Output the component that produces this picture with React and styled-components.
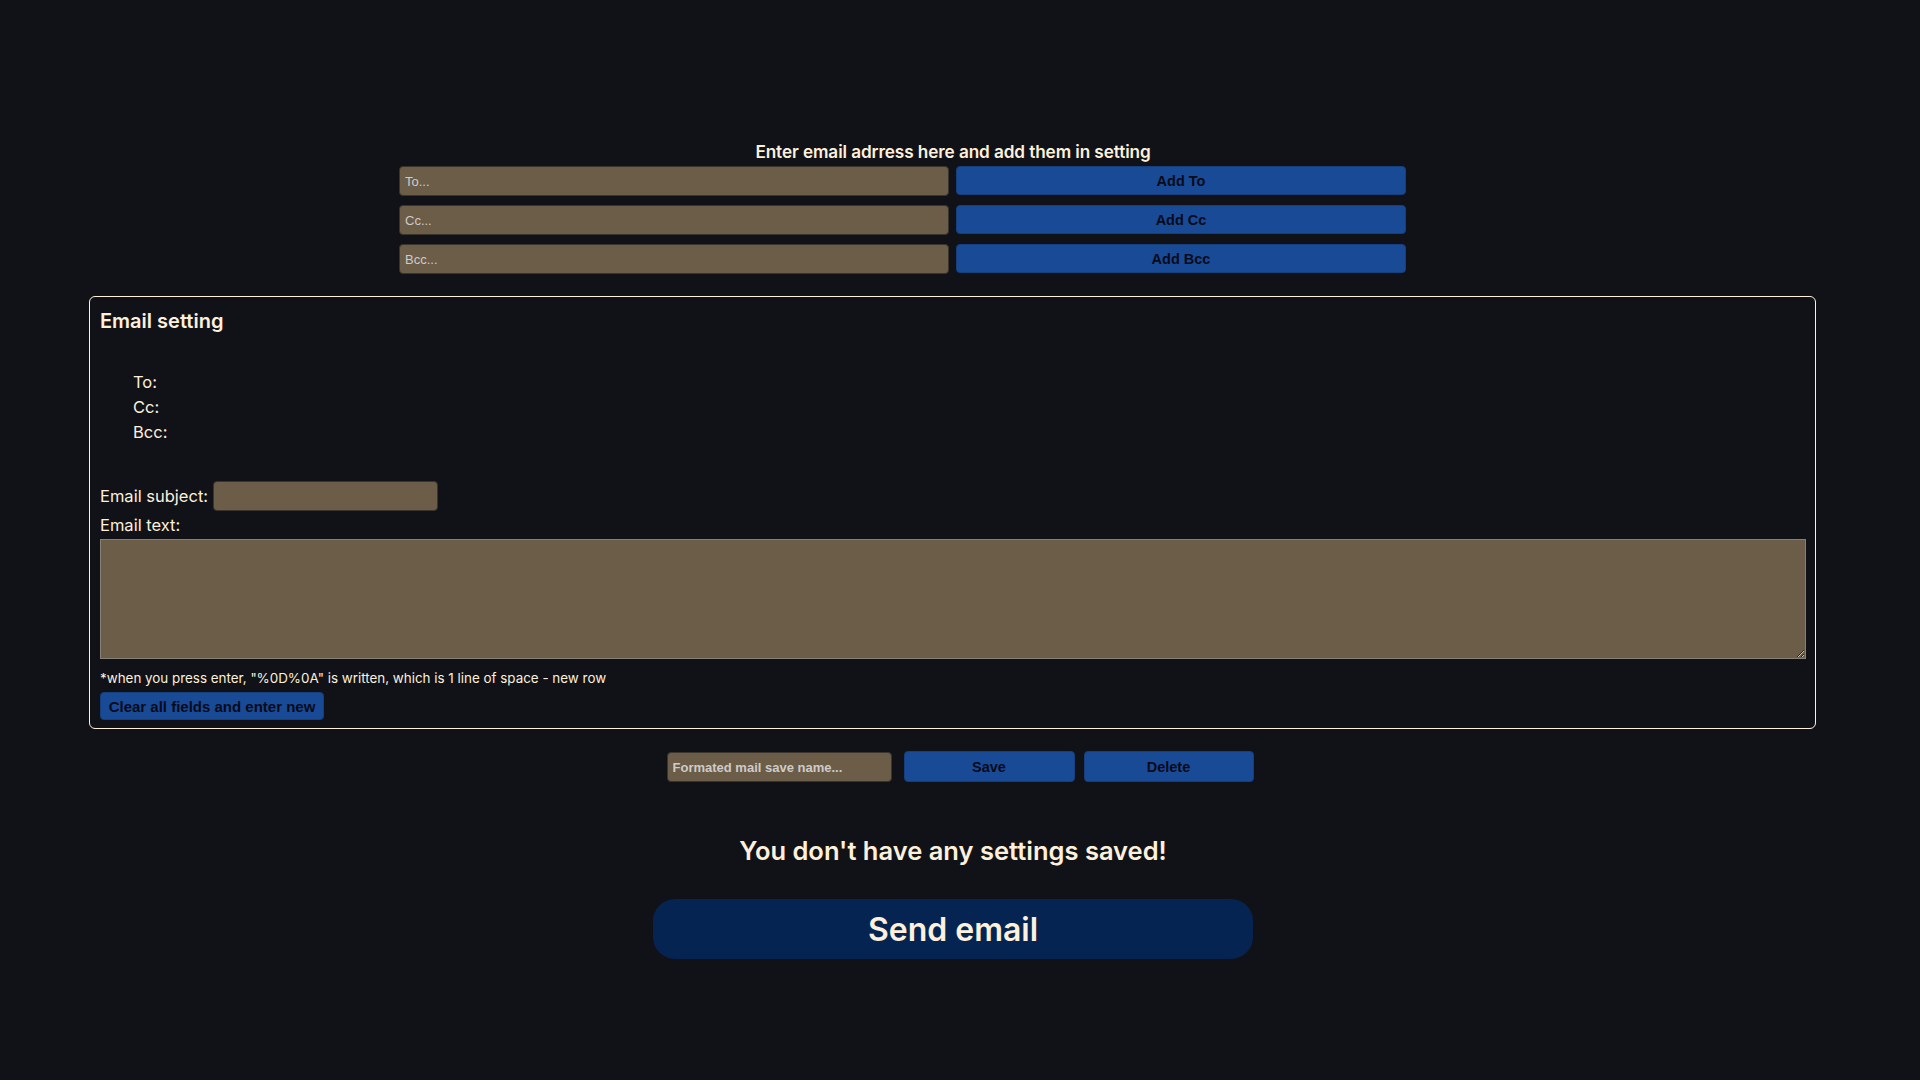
import React from "react";
import styled, { createGlobalStyle } from "styled-components";

const cream = "#fdf0dc";
const brown = "#6b5d48";
const blue = "#194a96";

const GlobalStyle = createGlobalStyle`
  body {
    margin: 0;
    background: #111217;
    color: ${cream};
    font-family: "Inter", "Open Sans", sans-serif;
  }
`;

const Page = styled.div`
  min-height: 1080px;
  padding-top: 139px;
  box-sizing: border-box;
`;

const Title = styled.h3`
  margin: 0;
  padding-right: 14px;
  text-align: center;
  font-size: 17.2px;
  font-weight: 600;
  line-height: 26px;
  letter-spacing: -0.1px;
`;

const AddressGrid = styled.div`
  display: grid;
  grid-template-columns: 550px 450px;
  column-gap: 7px;
  row-gap: 9px;
  margin: 1px 0 0 399px;
`;

const Field = styled.input`
  box-sizing: border-box;
  width: ${p => p.$width || "100%"};
  height: 30px;
  padding: 0 5px;
  background: ${brown};
  border: 1px solid #3a342c;
  border-radius: 4px;
  color: ${cream};
  font-family: "Liberation Sans", Arial, sans-serif;
  font-size: 13px;
  font-weight: ${p => (p.$bold ? 700 : 400)};
  outline: none;

  &::placeholder {
    color: #cfcbc8;
  }
`;

const Button = styled.button`
  box-sizing: border-box;
  width: ${p => p.$width || "100%"};
  height: ${p => p.$height || "29px"};
  padding: 0 4px;
  background: ${blue};
  border: 1px solid #163f80;
  border-radius: 4px;
  color: #080a1a;
  font-family: "Liberation Sans", Arial, sans-serif;
  font-size: ${p => p.$size || "14.5px"};
  font-weight: 700;
  white-space: nowrap;
  cursor: pointer;
`;

const Settings = styled.section`
  box-sizing: border-box;
  width: 1727px;
  margin: 22px 0 0 89px;
  padding: 9px 10px 8px 10px;
  border: 1px solid ${cream};
  border-radius: 6px;
`;

const SettingsHeading = styled.h2`
  margin: 0;
  font-size: 20px;
  font-weight: 600;
  line-height: 30px;
`;

const RecipientList = styled.ul`
  list-style: none;
  margin: 34px 0 0;
  padding-left: 33px;
  font-size: 16.5px;
  line-height: 25px;
`;

const SubjectRow = styled.label`
  display: flex;
  align-items: center;
  gap: 5px;
  margin-top: 36px;
  font-size: 16.5px;
`;

const Label = styled.div`
  font-size: 16.5px;
  line-height: 24px;
  margin-top: 2px;
`;

const TextArea = styled.textarea`
  display: block;
  box-sizing: border-box;
  width: 1706px;
  height: 120px;
  margin-top: 2px;
  background: ${brown};
  border: 1px solid #85807a;
  color: ${cream};
  outline: none;
`;

const Note = styled.p`
  margin: 9px 0 0;
  font-size: 13.4px;
  line-height: 20px;
`;

const ClearWrap = styled.div`
  margin-top: 4px;
`;

const SaveRow = styled.div`
  display: flex;
  justify-content: center;
  align-items: flex-start;
  gap: 11px;
  margin-top: 23px;
`;

const SaveButtons = styled.div`
  display: flex;
  gap: 9px;
  margin-left: 1px;
  margin-top: -1px;
`;

const Bottom = styled.div`
  display: flex;
  flex-direction: column;
  align-items: center;
  padding-right: 14px;
`;

const Empty = styled.h2`
  margin: 51px 0 0;
  font-size: 25.5px;
  font-weight: 600;
  line-height: 36px;
`;

const SendButton = styled.button`
  width: 600px;
  height: 60px;
  margin-top: 30px;
  background: #062452;
  border: none;
  border-radius: 22px;
  color: ${cream};
  font-family: "Inter", "Open Sans", sans-serif;
  font-size: 32px;
  font-weight: 600;
  cursor: pointer;
`;

const kinds = [
  { key: "to", ph: "To...", label: "Add To" },
  { key: "cc", ph: "Cc...", label: "Add Cc" },
  { key: "bcc", ph: "Bcc...", label: "Add Bcc" },
];

export default function App() {
  return (
    <Page>
      <GlobalStyle />
      <Title>Enter email adrress here and add them in setting</Title>
      <AddressGrid>
        {kinds.map(k => (
          <React.Fragment key={k.key}>
            <Field placeholder={k.ph} />
            <Button>{k.label}</Button>
          </React.Fragment>
        ))}
      </AddressGrid>

      <Settings>
        <SettingsHeading>Email setting</SettingsHeading>
        <RecipientList>
          <li>To:</li>
          <li>Cc:</li>
          <li>Bcc:</li>
        </RecipientList>
        <SubjectRow>
          Email subject:
          <Field $width="225px" />
        </SubjectRow>
        <Label>Email text:</Label>
        <TextArea />
        <Note>
          *when you press enter, "%0D%0A" is written, which is 1 line of space - new row
        </Note>
        <ClearWrap>
          <Button $width="224px" $height="28px" $size="15px">
            Clear all fields and enter new
          </Button>
        </ClearWrap>
      </Settings>

      <SaveRow>
        <Field $width="225px" $bold placeholder="Formated mail save name..." />
        <SaveButtons>
          <Button $width="171px" $height="31px">Save</Button>
          <Button $width="170px" $height="31px">Delete</Button>
        </SaveButtons>
      </SaveRow>

      <Bottom>
        <Empty>You don't have any settings saved!</Empty>
        <SendButton>Send email</SendButton>
      </Bottom>
    </Page>
  );
}
